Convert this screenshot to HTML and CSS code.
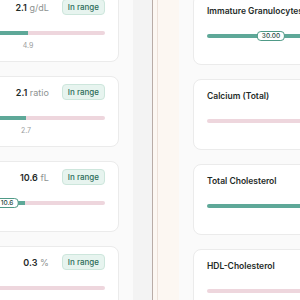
FILE: index.html
```html
<!DOCTYPE html>
<html>
<head>
<meta charset="UTF-8">
<title>Результаты анализов</title>
<link rel="stylesheet" href="styles.css">
</head>
<body>
<div class="screen">
	<!-- левая колонка: значения показателей -->
	<section class="pane pane_left">
		<div class="pane_inner">
			<div class="card metric">
				<div class="metric_head">
					<span class="metric_value"><b>2.1</b> g/dL</span>
					<span class="badge">In range</span>
				</div>
				<div class="track">
					<div class="fill" style="width:164px"></div>
					<span class="tick" style="left:164px">4.9</span>
				</div>
			</div>
			<div class="card metric">
				<div class="metric_head">
					<span class="metric_value"><b>2.1</b> ratio</span>
					<span class="badge">In range</span>
				</div>
				<div class="track">
					<div class="fill" style="width:162px"></div>
					<span class="tick" style="left:162px">2.7</span>
				</div>
			</div>
			<div class="card metric">
				<div class="metric_head">
					<span class="metric_value"><b>10.6</b> fL</span>
					<span class="badge">In range</span>
				</div>
				<div class="track">
					<div class="fill" style="width:161px"></div>
					<span class="thumb" style="left:143px">10.6</span>
				</div>
			</div>
			<div class="card metric">
				<div class="metric_head">
					<span class="metric_value"><b>0.3</b> %</span>
					<span class="badge">In range</span>
				</div>
				<div class="track"></div>
			</div>
		</div>
	</section>
	<div class="gutter"></div>
	<div class="splitter"></div>
	<!-- правая колонка: список тестов -->
	<section class="pane pane_right">
		<div class="pane_inner">
			<div class="card test">
				<div class="test_name">Immature Granulocytes</div>
				<div class="track track_ok">
					<span class="thumb" style="left:64px">30.00</span>
				</div>
			</div>
			<div class="card test">
				<div class="test_name">Calcium (Total)</div>
				<div class="track"></div>
			</div>
			<div class="card test">
				<div class="test_name">Total Cholesterol</div>
				<div class="track track_ok"></div>
			</div>
			<div class="card test">
				<div class="test_name">HDL-Cholesterol</div>
				<div class="track"></div>
			</div>
		</div>
	</section>
</div>
</body>
</html>
```
FILE: styles.css
```css
/*общая раскладка*/
html, body {
	margin: 0;
	padding: 0;
}
body {
	background: #fafafa;
	font-family: 'Inter', 'Liberation Sans', sans-serif;
	color: #1e2b28;
}
.screen {
	display: flex;
	height: 300px;
	overflow: hidden;
}
.pane {
	overflow: hidden;
	flex-shrink: 0;
}
.pane_inner {
	display: flex;
	flex-direction: column;
	gap: 14px;
}

/*левая колонка*/
.pane_left {
	width: 133px;
	background: #fafafa;
}
.pane_left .pane_inner {
	width: 269px;
	margin-left: -150px;
	margin-top: -9px;
}
.gutter {
	width: 19px;
	flex-shrink: 0;
	background: #f3f3f3;
}
.splitter {
	width: 26px;
	flex-shrink: 0;
	border-left: 1px solid #b9aca6;
	background: linear-gradient(to right, #fcf7f2 4px, #ece1d9 4px, #ece1d9 5px, #fcf7f2 5px);
}
.pane_right {
	flex: 1;
	padding-left: 14px;
	background: #fafafa;
}
.pane_right .pane_inner {
	width: 220px;
	margin-top: -6px;
}

/*карточки*/
.card {
	box-sizing: border-box;
	height: 71px;
	background: #fff;
	border: 1px solid #ebebeb;
	border-radius: 8px;
}
.metric {
	padding: 7px 13px 0 13px;
}
.metric_head {
	display: flex;
	justify-content: flex-end;
	align-items: center;
	gap: 13px;
	height: 16px;
}
.metric_value {
	font-size: 9px;
	color: #8d9291;
}
.metric_value b {
	font-weight: 600;
	color: #1f2b29;
}
.badge {
	box-sizing: border-box;
	height: 16px;
	padding: 0 5px;
	display: flex;
	align-items: center;
	background: #e7f4ef;
	border: 1px solid #cde6dc;
	border-radius: 4px;
	font-size: 8px;
	font-weight: 500;
	color: #2d6d5a;
}
.metric .track {
	margin-top: 16px;
}

/*шкала*/
.track {
	position: relative;
	height: 4px;
	border-radius: 2px;
	background: #eed6dd;
}
.track_ok {
	background: #5ea898;
}
.fill {
	height: 4px;
	border-radius: 2px 0 0 2px;
	background: #5ea898;
}
.tick {
	position: absolute;
	top: 10px;
	transform: translateX(-50%);
	font-size: 7px;
	color: #9b9d9d;
}
.thumb {
	position: absolute;
	top: -3px;
	box-sizing: border-box;
	height: 10px;
	padding: 0 4px;
	display: flex;
	align-items: center;
	transform: translateX(-50%);
	background: #fff;
	border: 1.5px solid #4f9a87;
	border-radius: 4px;
	font-size: 6.5px;
	font-weight: 500;
	color: #2a4a42;
}

/*правая колонка*/
.test {
	padding: 10px 13px 0 13px;
}
.test_name {
	height: 12px;
	line-height: 12px;
	font-size: 8.5px;
	font-weight: 600;
	white-space: nowrap;
}
.test .track {
	margin-top: 17px;
}
```
